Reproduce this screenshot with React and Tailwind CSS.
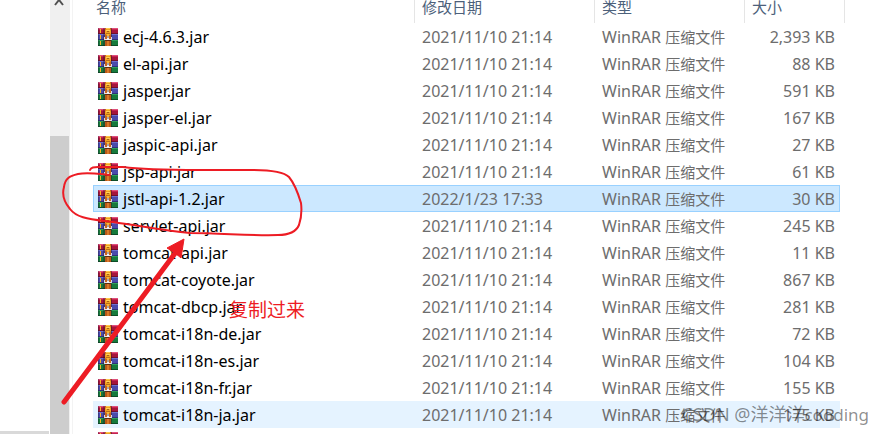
const OLD = '2021/11/10 21:14';

const files = [
  { name: 'ecj-4.6.3.jar', date: OLD, size: '2,393 KB' },
  { name: 'el-api.jar', date: OLD, size: '88 KB' },
  { name: 'jasper.jar', date: OLD, size: '591 KB' },
  { name: 'jasper-el.jar', date: OLD, size: '167 KB' },
  { name: 'jaspic-api.jar', date: OLD, size: '27 KB' },
  { name: 'jsp-api.jar', date: OLD, size: '61 KB' },
  { name: 'jstl-api-1.2.jar', date: '2022/1/23 17:33', size: '30 KB', state: 'selected' },
  { name: 'servlet-api.jar', date: OLD, size: '245 KB' },
  { name: 'tomcat-api.jar', date: OLD, size: '11 KB' },
  { name: 'tomcat-coyote.jar', date: OLD, size: '867 KB' },
  { name: 'tomcat-dbcp.jar', date: OLD, size: '281 KB' },
  { name: 'tomcat-i18n-de.jar', date: OLD, size: '72 KB' },
  { name: 'tomcat-i18n-es.jar', date: OLD, size: '104 KB' },
  { name: 'tomcat-i18n-fr.jar', date: OLD, size: '155 KB' },
  { name: 'tomcat-i18n-ja.jar', date: OLD, size: '175 KB', state: 'hover' },
];

function ArchiveIcon() {
  return (
    <svg width="20" height="18" viewBox="0 0 20 18" className="block shrink-0" aria-hidden="true">
      <rect width="20" height="6" fill="#a5153c" />
      <rect width="20" height="1" fill="#e0507c" />
      <rect y="1" width="20" height="1" fill="#c42450" />
      <rect y="5" width="20" height="1" fill="#6e0f2c" />
      <rect y="6" width="20" height="6" fill="#4a4bab" />
      <rect y="6" width="20" height="1" fill="#6c6fd0" />
      <rect y="11" width="20" height="1" fill="#2f3078" />
      <rect y="12" width="20" height="6" fill="#177a3c" />
      <rect y="12" width="20" height="1" fill="#2fa05a" />
      <rect y="17" width="20" height="1" fill="#0d4d26" />
      <rect width="1" height="18" fill="#1b1830" opacity=".3" />
      <rect x="2" y="1" width="1" height="4" fill="#f5b52a" />
      <rect x="2" y="7" width="1" height="4" fill="#f5b52a" />
      <rect x="2" y="13" width="1" height="4" fill="#f5b52a" />
      <rect x="5" width="2" height="18" fill="#2a1420" opacity=".35" />
      <rect x="13" width="1" height="18" fill="#2a1420" opacity=".45" />
      <rect x="7" width="6" height="18" fill="#c8641c" />
      <rect x="7" y="13" width="6" height="5" fill="#b9581a" />
      <rect x="9" y="13" width="2" height="5" fill="#d97a2a" />
      <rect x="8" width="4" height="1" fill="#ffc94a" />
      <rect x="7" y="1" width="6" height="6" rx="2" fill="#f2a522" />
      <rect x="8" y="2" width="4" height="1" fill="#ffd35c" />
      <rect x="9" y="3" width="2" height="1" fill="#a5611a" />
      <rect x="8" y="5" width="4" height="1" fill="#b8701c" />
      <rect x="9" y="6" width="2" height="2" fill="#f7b733" />
      <rect x="6" y="9" width="1" height="3" fill="#d9d6e6" />
      <rect x="13" y="9" width="1" height="3" fill="#d9d6e6" />
      <rect x="7" y="11" width="2" height="1" fill="#e8e4ea" />
      <rect x="11" y="11" width="2" height="1" fill="#e8e4ea" />
      <rect x="9" y="8" width="2" height="3" fill="#a9a5aa" />
      <rect x="9" y="10" width="2" height="2" fill="#f2f0f2" />
      <rect x="7" y="12" width="6" height="1" fill="#5d2c14" />
    </svg>
  );
}

const fills = {
  selected: 'bg-[#cce8ff] border-[#99d1ff]',
  hover: 'bg-[#e5f3ff] border-[#e5f3ff]',
  plain: 'border-transparent',
};

function FileRow({ file }) {
  const cell = `h-[27px] border-y p-0 ${fills[file.state || 'plain']}`;
  return (
    <tr className="text-[#6d6d6d]">
      <td className={`${cell} border-l pl-1 text-black`}>
        <div className="flex items-center gap-[5px]">
          <ArchiveIcon />
          <span>{file.name}</span>
        </div>
      </td>
      <td className={`${cell} pl-[7px]`}>{file.date}</td>
      <td className={`${cell} pl-[7px]`}>
        WinRAR <span className="text-[15px]">压缩文件</span>
      </td>
      <td className={`${cell} border-r pr-1 text-right`}>{file.size}</td>
      <td className="p-0" />
    </tr>
  );
}

function Annotations() {
  return (
    <div className="pointer-events-none absolute inset-0">
      <svg width="320" height="434" viewBox="0 0 320 434" className="absolute left-0 top-0" fill="none" aria-hidden="true">
        <path
          d="M90 170C91 167 94 167 98 167L123 167C145 170 170 170 200 170L252 170C270 170 284 172 289 177C294 183 298 193 301 203C302 211 301 219 299 225C296 232 289 235 278 235C252 236 221 233 190 233C160 230 130 224 105 221C87 219 76 217 70 209C64 202 62 194 64 187C65 179 69 176 78 174C88 172 99 174 110 175"
          stroke="#ed1c24" strokeWidth="2" strokeLinecap="round" strokeLinejoin="round"
        />
        <path d="M64 402L176 252" stroke="#ed1c24" strokeWidth="5" strokeLinecap="round" />
        <path d="M184 239L181 258L175 253L167 248Z" fill="#ed1c24" stroke="#ed1c24" strokeLinejoin="round" />
      </svg>
      <span className="absolute left-[229px] top-[296px] text-[19px] leading-7 text-[#ed1c24]">复制过来</span>
      <span className="absolute right-[15px] top-[402px] whitespace-nowrap text-[18px] leading-6 text-black/45">
        CSDN @洋洋洋<span className="text-[17px]">cooding</span>
      </span>
    </div>
  );
}

function Heading({ children, className }) {
  return (
    <th className={`h-[23px] border-[#e5e5e5] p-0 text-left font-normal ${className}`}>
      <div className="-mt-2.5">{children}</div>
    </th>
  );
}

export default function App() {
  return (
    <div className="relative flex h-screen overflow-hidden bg-white font-['Noto_Sans','Noto_Sans_CJK_SC',sans-serif] text-[16px] leading-[20px]">
      <div className="flex w-[50px] shrink-0 flex-col justify-end pr-px">
        <div className="h-[3px] bg-[#d9d9d9]" />
      </div>
      <div className="flex w-5 shrink-0 flex-col bg-[#f0f0f0]">
        <button type="button" aria-label="向上滚动" className="flex h-[136px] items-start justify-center">
          <svg width="12" height="6" viewBox="0 0 12 6" fill="none" aria-hidden="true">
            <path d="M1 5L5 0L9 5" stroke="#505050" strokeWidth="2" />
          </svg>
        </button>
        <div className="mr-px grow bg-[#cdcdcd]" />
      </div>
      <main className="ml-0.5 min-w-0 grow border-l border-[#f3f3f3] pl-5 pr-[39px]">
        <table className="w-full table-fixed border-separate border-spacing-0 whitespace-nowrap">
          <colgroup>
            <col />
            <col className="w-[180px]" />
            <col className="w-[150px]" />
            <col className="w-[95px]" />
            <col className="w-[5px]" />
          </colgroup>
          <thead className="text-[15px] text-[#4c607a]">
            <tr>
              <Heading className="border-r pl-[3px]">名称</Heading>
              <Heading className="border-r pl-[7px]">修改日期</Heading>
              <Heading className="border-r pl-[7px]">类型</Heading>
              <Heading className="pl-[7px]">大小</Heading>
              <td className="border-r border-[#e5e5e5] p-0" />
            </tr>
          </thead>
          <tbody>
            {files.map((file) => (
              <FileRow key={file.name} file={file} />
            ))}
            <tr>
              <td className="p-0 pl-[5px] pt-1" colSpan={5}>
                <ArchiveIcon />
              </td>
            </tr>
          </tbody>
        </table>
      </main>
      <Annotations />
    </div>
  );
}
